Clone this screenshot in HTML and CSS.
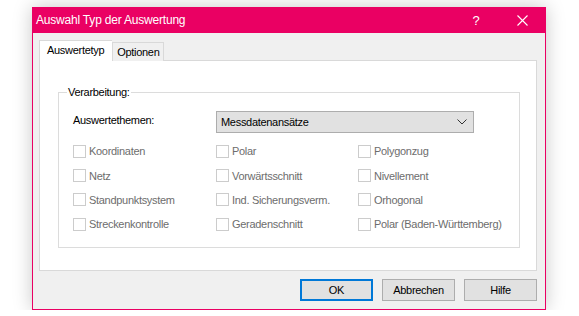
FILE: index.html
```html
<!DOCTYPE html>
<html lang="de">
<head>
  <meta charset="UTF-8" />
  <meta name="viewport" content="width=device-width, initial-scale=1.0"/>
  <title>Auswahl Typ der Auswertung</title>
  <link rel="stylesheet" href="styles.css">
</head>
<body>
  <div class="window">
    <div class="titlebar">
      <span class="title">Auswahl Typ der Auswertung</span>
      <span class="help">?</span>
      <span class="close">
        <svg width="11" height="11" viewBox="0 0 11 11"><path d="M0.5 0.5 L10.5 10.5 M10.5 0.5 L0.5 10.5" stroke="#fff" stroke-width="1.1" fill="none"/></svg>
      </span>
    </div>

    <div class="client">
      <div class="tabs">
        <div class="tab active">Auswertetyp</div>
        <div class="tab">Optionen</div>
      </div>

      <div class="panel">
        <div class="group">
          <span class="group-title">Verarbeitung:</span>
          <div class="theme-row">
            <span class="theme-label">Auswertethemen:</span>
            <div class="select">
              <span>Messdatenansätze</span>
              <svg width="10" height="6" viewBox="0 0 10 6"><path d="M0.5 0.5 L5 5 L9.5 0.5" stroke="#333" stroke-width="1" fill="none"/></svg>
            </div>
          </div>
          <div class="checks">
            <label class="check"><span class="box"></span>Koordinaten</label>
            <label class="check"><span class="box"></span>Polar</label>
            <label class="check"><span class="box"></span>Polygonzug</label>
            <label class="check"><span class="box"></span>Netz</label>
            <label class="check"><span class="box"></span>Vorwärtsschnitt</label>
            <label class="check"><span class="box"></span>Nivellement</label>
            <label class="check"><span class="box"></span>Standpunktsystem</label>
            <label class="check"><span class="box"></span>Ind. Sicherungsverm.</label>
            <label class="check"><span class="box"></span>Orhogonal</label>
            <label class="check"><span class="box"></span>Streckenkontrolle</label>
            <label class="check"><span class="box"></span>Geradenschnitt</label>
            <label class="check"><span class="box"></span>Polar (Baden-Württemberg)</label>
          </div>
        </div>
      </div>

      <div class="buttons">
        <button class="btn default">OK</button>
        <button class="btn">Abbrechen</button>
        <button class="btn">Hilfe</button>
      </div>
    </div>
  </div>
</body>
</html>
```

FILE: styles.css
```css
body {
  margin: 0;
  padding: 7px 0 0 32px;
  background-color: #fff;
  font-family: "Liberation Sans", Arial, sans-serif;
  font-size: 11px;
  letter-spacing: -0.3px;
  color: #000;
}
.window {
  width: 514px;
  height: 303px;
  box-sizing: border-box;
  border: 1px solid #ea0063;
  border-top: none;
  background-color: #f0f0f0;
  box-shadow: 0 0 18px rgba(0,0,0,0.22);
  display: flex;
  flex-direction: column;
}
.titlebar {
  height: 26px;
  margin: 0 -1px;
  background-color: #ea0063;
  color: #fff;
  display: flex;
  align-items: center;
  padding-left: 4px;
}
.title {
  font-size: 12px;
  letter-spacing: -0.2px;
  flex: 1;
  padding-bottom: 1px;
}
.help {
  font-size: 13px;
  letter-spacing: 0;
  width: 46px;
  text-align: center;
}
.close {
  width: 46px;
  display: flex;
  justify-content: center;
  padding-right: 1px;
}
.client {
  flex: 1;
  padding: 7px 8px 0 6px;
  display: flex;
  flex-direction: column;
}
.tabs {
  display: flex;
  height: 21px;
  margin-bottom: -1px;
  position: relative;
  z-index: 1;
}
.tab {
  border: 1px solid #d9d9d9;
  border-bottom: none;
  background-color: #f0f0f0;
  margin-top: 2px;
  padding: 2px 4px 0 4px;
  line-height: 14px;
}
.tab.active {
  background-color: #fff;
  margin-top: 0;
  padding: 2px 8px 0 7px;
  border-right: none;
}
.panel {
  height: 211px;
  box-sizing: border-box;
  border: 1px solid #d9d9d9;
  background-color: #fff;
  padding: 31px 16px 0 18px;
}
.group {
  position: relative;
  height: 156px;
  box-sizing: border-box;
  border: 1px solid #dcdcdc;
  padding: 18px 0 0 14px;
}
.group-title {
  position: absolute;
  top: -8px;
  left: 8px;
  background-color: #fff;
  padding: 0 1px;
  line-height: 14px;
}
.theme-row {
  display: flex;
  align-items: center;
  height: 22px;
}
.theme-label {
  width: 143px;
  padding-bottom: 4px;
}
.select {
  width: 258px;
  height: 22px;
  box-sizing: border-box;
  border: 1px solid #adadad;
  background-color: #e1e1e1;
  display: flex;
  align-items: center;
  justify-content: space-between;
  padding: 0 6px 0 4px;
}
.checks {
  margin-top: 6px;
  display: grid;
  grid-template-columns: 143px 142px auto;
  grid-auto-rows: 24.4px;
}
.check {
  display: flex;
  align-items: center;
  color: #6d6d6d;
}
.box {
  width: 13px;
  height: 13px;
  box-sizing: border-box;
  border: 1px solid #cccccc;
  background-color: #fff;
  margin-right: 3px;
}
.buttons {
  display: flex;
  justify-content: flex-end;
  gap: 9px;
  padding: 8px 0 0 0;
}
.btn {
  width: 73px;
  height: 22px;
  box-sizing: border-box;
  border: 1px solid #adadad;
  background-color: #e1e1e1;
  font-family: "Liberation Sans", Arial, sans-serif;
  font-size: 11px;
  letter-spacing: -0.3px;
  color: #000;
  padding: 0;
}
.btn.default {
  border: 2px solid #0078d7;
}
```
